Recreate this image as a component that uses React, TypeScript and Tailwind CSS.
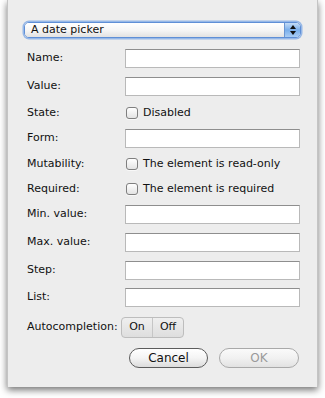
import { ReactNode } from "react";

const font = { fontFamily: '"DejaVu Sans", "Lucida Grande", sans-serif' };

function Label({ children }: { children: ReactNode }) {
  return <div className="w-[98px] shrink-0 text-[11px] text-[#111]">{children}</div>;
}

function TextRow({ label, mt }: { label: string; mt: string }) {
  return (
    <div className={`flex items-center h-[19px] ${mt}`}>
      <Label>{label}</Label>
      <div className="w-[175px] h-[19px] bg-white border border-[#b9b9b9] border-t-[#8e8e8e]" />
    </div>
  );
}

function CheckRow({ label, text, mt }: { label: string; text: string; mt: string }) {
  return (
    <div className={`flex items-center h-[18px] ${mt}`}>
      <Label>{label}</Label>
      <div className="flex items-center gap-[5px] ml-[1px]">
        <div className="w-[12px] h-[12px] rounded-[3px] border border-[#7f7f7f] bg-gradient-to-b from-white to-[#e3e3e3] shadow-[0_1px_0_rgba(255,255,255,0.6)]" />
        <span className="text-[11px] text-[#111]">{text}</span>
      </div>
    </div>
  );
}

export default function App() {
  return (
    <div className="w-[325px] h-[398px] bg-white overflow-hidden" style={font}>
      <div className="ml-[7px] w-[311px] h-[387px] bg-[#ededed] border-x border-[#c4c4c4] shadow-[0_3px_7px_rgba(0,0,0,0.55)] pl-[19px] pt-[22px]">
        {/* popup */}
        <div className="-ml-[3px] w-[277px] h-[16px] flex rounded-[5px] border border-[#5f8fd6] shadow-[0_0_0_1.5px_rgba(120,165,230,0.75)] overflow-hidden">
          <div className="flex-1 flex items-center pl-[6px] bg-gradient-to-b from-white via-[#f6f6f6] to-[#e2e2e2] text-[11px] text-[#111]">
            A date picker
          </div>
          <div className="w-[16px] flex flex-col items-center justify-center gap-[2px] border-l border-[#6b95d0] bg-gradient-to-b from-[#c4dcf7] via-[#79aeeb] to-[#a9cdf4]">
            <svg width="6" height="4" viewBox="0 0 6 4">
              <path d="M3 0 L6 4 L0 4 Z" fill="#111" />
            </svg>
            <svg width="6" height="4" viewBox="0 0 6 4">
              <path d="M0 0 L6 0 L3 4 Z" fill="#111" />
            </svg>
          </div>
        </div>

        <TextRow label="Name:" mt="mt-[11px]" />
        <TextRow label="Value:" mt="mt-[9px]" />
        <CheckRow label="State:" text="Disabled" mt="mt-[8px]" />
        <TextRow label="Form:" mt="mt-[7px]" />
        <CheckRow label="Mutability:" text="The element is read-only" mt="mt-[7px]" />
        <CheckRow label="Required:" text="The element is required" mt="mt-[7px]" />
        <TextRow label="Min. value:" mt="mt-[7px]" />
        <TextRow label="Max. value:" mt="mt-[9px]" />
        <TextRow label="Step:" mt="mt-[9px]" />
        <TextRow label="List:" mt="mt-[8px]" />

        <div className="flex items-center h-[21px] mt-[10px]">
          <div className="w-[94px] shrink-0 text-[11px] text-[#111]">Autocompletion:</div>
          <div className="flex h-[21px] rounded-[4px] border border-[#bdbdbd] bg-gradient-to-b from-[#efefef] to-[#dedede] text-[11px] text-[#111]">
            <div className="w-[31px] flex items-center justify-center border-r border-[#c6c6c6]">On</div>
            <div className="w-[30px] flex items-center justify-center">Off</div>
          </div>
        </div>

        <div className="flex h-[20px] mt-[10px] ml-[102px] gap-[11px]">
          <div className="w-[79px] h-[20px] rounded-full border border-[#5c5c5c] bg-gradient-to-b from-white via-[#f4f4f4] to-[#dcdcdc] flex items-center justify-center text-[12px] text-[#111]">
            Cancel
          </div>
          <div className="w-[80px] h-[20px] rounded-full border border-[#a9a9a9] bg-gradient-to-b from-[#fafafa] via-[#f1f1f1] to-[#e2e2e2] flex items-center justify-center text-[12px] text-[#9a9a9a]">
            OK
          </div>
        </div>
      </div>
    </div>
  );
}
